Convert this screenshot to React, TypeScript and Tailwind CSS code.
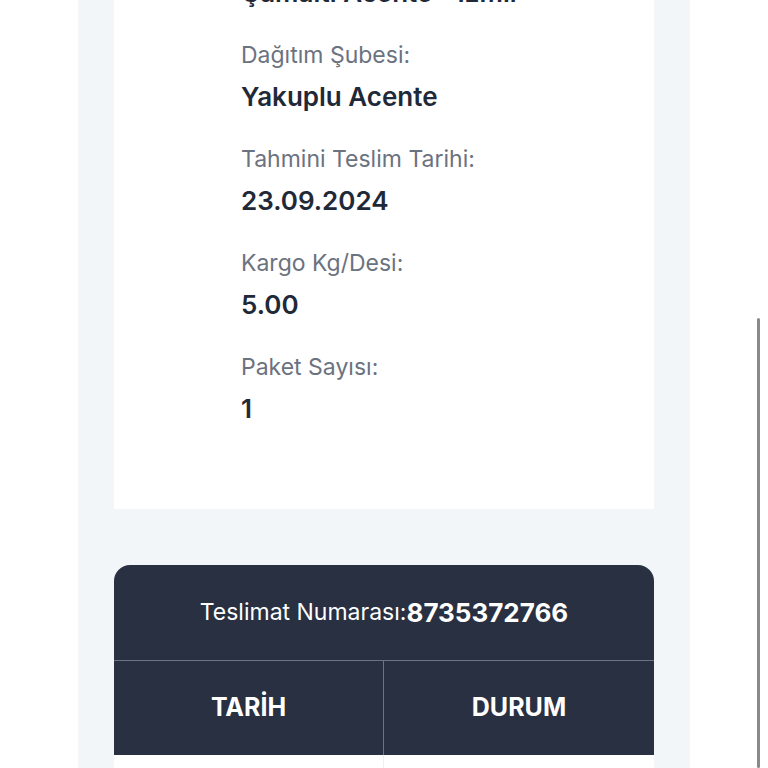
const rows = [
  { label: "Çıkış Şubesi:", value: "Çamaltı Acente - İzmir" },
  { label: "Dağıtım Şubesi:", value: "Yakuplu Acente" },
  { label: "Tahmini Teslim Tarihi:", value: "23.09.2024" },
  { label: "Kargo Kg/Desi:", value: "5.00" },
  { label: "Paket Sayısı:", value: "1" },
];

const App = () => {
  return (
    <div
      className="relative h-[768px] w-full overflow-hidden bg-white"
      style={{ fontFamily: "Inter, 'Noto Sans', sans-serif" }}
    >
      <div className="-mt-[64px] ml-[78px] w-[612px] bg-[#f3f6f9] px-[36px]">
        <div className="flex flex-col gap-[31px] bg-white pb-[84px] pl-[127px]">
          {rows.map((r) => (
            <div key={r.label} className="flex flex-col gap-[11px]">
              <span className="text-[23px] leading-[30px] text-[#6b7280]">{r.label}</span>
              <span className="text-[26px] font-semibold leading-[32px] text-[#1f2937]">
                {r.value}
              </span>
            </div>
          ))}
        </div>

        <div className="mt-[56px] overflow-hidden rounded-t-2xl">
          <div className="flex h-[95px] items-center justify-center bg-[#283042] text-white">
            <span className="text-[23px]">Teslimat Numarası:</span>
            <span className="text-[26px] font-bold">8735372766</span>
          </div>
          <div className="grid h-[95px] grid-cols-2 border-t border-[#6b7385] bg-[#283042] text-[25px] font-bold text-white">
            <div className="flex items-center justify-center border-r border-[#6b7385]">TARİH</div>
            <div className="flex items-center justify-center">DURUM</div>
          </div>
          <div className="grid h-[60px] grid-cols-2 bg-white">
            <div className="border-r border-[#eef0f3]" />
            <div />
          </div>
        </div>
      </div>

      <div className="absolute bottom-0 left-[757px] top-[318px] w-[3px] rounded-full bg-[#8a8a8a]" />
    </div>
  );
};

export default App;
